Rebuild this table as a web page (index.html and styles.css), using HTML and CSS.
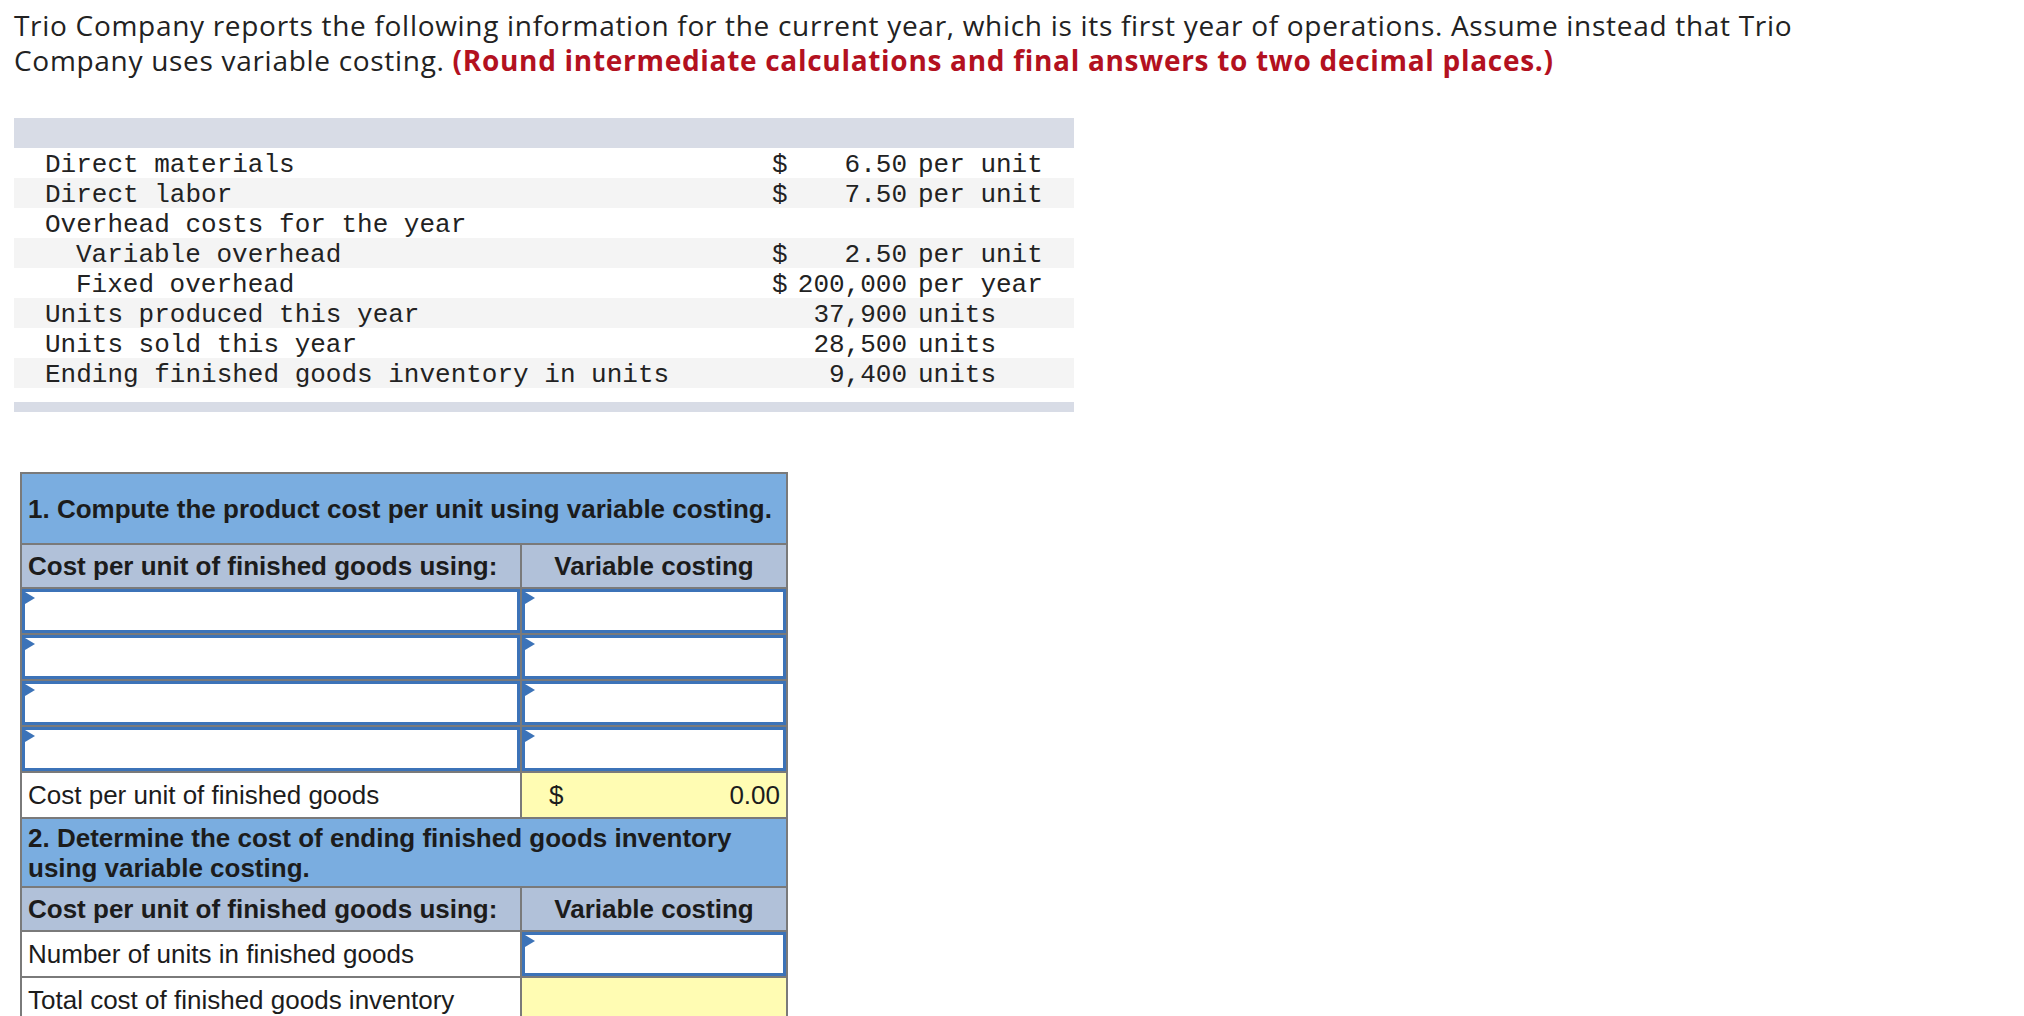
FILE: index.html
```html
<!DOCTYPE html>
<html lang="en">
<head>
<meta charset="utf-8">
<title>Trio Company – Variable costing</title>
<link rel="stylesheet" href="styles.css">
</head>
<body>
<div class="page">
  <p class="intro">Trio Company reports the following information for the current year, which is its first year of operations. Assume instead that Trio<br>Company uses variable costing. <strong class="note">(Round intermediate calculations and final answers to two decimal places.)</strong></p>

  <table class="facts">
    <colgroup>
      <col class="c-label"><col class="c-cur"><col class="c-num"><col class="c-unit">
    </colgroup>
    <thead>
      <tr class="bar"><th colspan="4"></th></tr>
    </thead>
    <tbody>
      <tr><td class="label">Direct materials</td><td class="cur">$</td><td class="num">6.50</td><td class="unit">per unit</td></tr>
      <tr><td class="label">Direct labor</td><td class="cur">$</td><td class="num">7.50</td><td class="unit">per unit</td></tr>
      <tr><td class="label">Overhead costs for the year</td><td class="cur"></td><td class="num"></td><td class="unit"></td></tr>
      <tr><td class="label sub">Variable overhead</td><td class="cur">$</td><td class="num">2.50</td><td class="unit">per unit</td></tr>
      <tr><td class="label sub">Fixed overhead</td><td class="cur">$</td><td class="num">200,000</td><td class="unit">per year</td></tr>
      <tr><td class="label">Units produced this year</td><td class="cur"></td><td class="num">37,900</td><td class="unit">units</td></tr>
      <tr><td class="label">Units sold this year</td><td class="cur"></td><td class="num">28,500</td><td class="unit">units</td></tr>
      <tr><td class="label">Ending finished goods inventory in units</td><td class="cur"></td><td class="num">9,400</td><td class="unit">units</td></tr>
    </tbody>
    <tfoot>
      <tr class="gap"><td colspan="4"></td></tr>
      <tr class="bar bar-bottom"><td colspan="4"></td></tr>
    </tfoot>
  </table>

  <table class="answers">
    <colgroup><col class="a-left"><col class="a-right"></colgroup>
    <tr class="section s1"><td colspan="2">1. Compute the product cost per unit using variable costing.</td></tr>
    <tr class="col-head"><td>Cost per unit of finished goods using:</td><td class="center">Variable costing</td></tr>
    <tr class="entry"><td class="input-cell"><div class="field"></div></td><td class="input-cell"><div class="field"></div></td></tr>
    <tr class="entry"><td class="input-cell"><div class="field"></div></td><td class="input-cell"><div class="field"></div></td></tr>
    <tr class="entry"><td class="input-cell"><div class="field"></div></td><td class="input-cell"><div class="field"></div></td></tr>
    <tr class="entry"><td class="input-cell"><div class="field"></div></td><td class="input-cell"><div class="field"></div></td></tr>
    <tr class="line"><td>Cost per unit of finished goods</td><td class="calc"><div class="amount"><span>$</span><span>0.00</span></div></td></tr>
    <tr class="section s2"><td colspan="2">2. Determine the cost of ending finished goods inventory using variable costing.</td></tr>
    <tr class="col-head"><td>Cost per unit of finished goods using:</td><td class="center">Variable costing</td></tr>
    <tr class="line"><td>Number of units in finished goods</td><td class="input-cell"><div class="field"></div></td></tr>
    <tr class="line"><td>Total cost of finished goods inventory</td><td class="calc"></td></tr>
  </table>
</div>
</body>
</html>
```

FILE: styles.css
```css
html, body {
  margin: 0;
  padding: 0;
  background: #ffffff;
}

.page {
  padding: 8px 14px 0 14px;
}

.intro {
  margin: 0;
  font-family: "Open Sans", Lato, sans-serif;
  font-size: 28px;
  letter-spacing: 0.7px;
  line-height: 35px;
  color: #222222;
}

.note {
  color: #b3111f;
  font-weight: 700;
}

/* ---------- facts table ---------- */
.facts {
  margin-top: 40px;
  width: 1060px;
  border-collapse: collapse;
  table-layout: fixed;
  font-family: "Liberation Mono", "Courier New", monospace;
  font-size: 26px;
  color: #222222;
}

.c-label { width: 758px; }
.c-cur { width: 18px; }
.c-num { width: 117px; }
.c-unit { width: 167px; }

.facts th,
.facts td {
  padding: 0;
  height: 30px;
  line-height: 30px;
  white-space: pre;
}

.facts tbody td {
  box-sizing: border-box;
  padding-top: 4px;
  line-height: 26px;
}

.facts .bar th,
.facts .bar td {
  background: #d8dce6;
}

.facts .bar-bottom td {
  height: 10px;
  line-height: 10px;
}

.facts .gap td {
  height: 14px;
  line-height: 14px;
}

.facts tbody tr:nth-child(even) td {
  background: #f4f4f4;
}

.facts .label { padding-left: 31px; }
.facts .label.sub { padding-left: 62px; }
.facts .num { text-align: right; }
.facts .unit { padding-left: 11px; }

/* ---------- answers table ---------- */
.answers {
  margin: 60px 0 0 6px;
  width: 766px;
  border-collapse: collapse;
  table-layout: fixed;
  font-family: "Liberation Sans", Arial, sans-serif;
  font-size: 26px;
  line-height: 30px;
  color: #1c1c1c;
}

.a-left { width: 500px; }
.a-right { width: 266px; }

.answers td {
  border: 2px solid #7a7a7a;
  padding: 0 6px;
  vertical-align: middle;
}

.answers .section td {
  background: #7aade0;
  font-weight: 700;
}

.answers .s1 td { height: 69px; }
.answers .s2 td { height: 67px; }

.answers .col-head td {
  background: #b1c1d9;
  font-weight: 700;
  height: 42px;
}

.answers .center { text-align: center; }

.answers .line td { height: 44px; }

.answers .entry td { height: 44px; }

.answers td.input-cell {
  padding: 0;
}

.field {
  position: relative;
  box-sizing: border-box;
  height: 44px;
  border: 3px solid #3c73b8;
  background: #ffffff;
}

.field::before {
  content: "";
  position: absolute;
  left: 0;
  top: 0;
  width: 0;
  height: 0;
  border-left: 10px solid #3c73b8;
  border-top: 6px solid transparent;
  border-bottom: 6px solid transparent;
}

.answers td.calc {
  background: #fffcb3;
}

.amount {
  display: flex;
  justify-content: space-between;
  padding-left: 21px;
}
```
